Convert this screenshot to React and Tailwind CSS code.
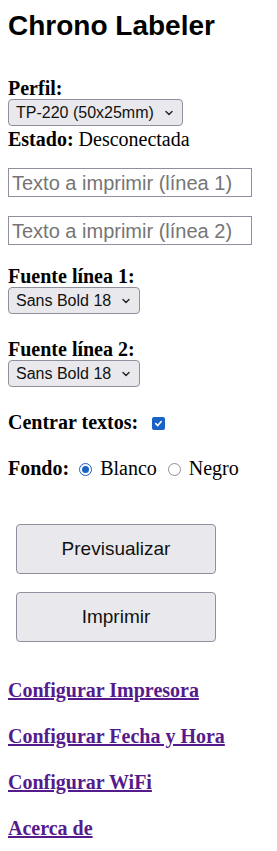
import { useState } from "react";

const serif = "font-['Liberation_Serif','Times_New_Roman',serif]";
const sans = "font-['Liberation_Sans',Arial,sans-serif]";

const Chevron = () => (
  <svg width="10" height="10" viewBox="0 0 10 10" className="ml-2 shrink-0">
    <path d="M2 3.5 L5 6.5 L8 3.5" fill="none" stroke="#222" strokeWidth="1.4" strokeLinecap="round" strokeLinejoin="round" />
  </svg>
);

const FakeSelect = ({ value, width }) => (
  <div className={`flex h-[27px] items-center rounded-[4px] border border-[#8f8f9d] bg-[#e9e9ed] pl-[7px] pr-[8px] text-[16px] text-[#111] ${sans} ${width}`}>
    <span className="flex-1 whitespace-nowrap leading-none">{value}</span>
    <Chevron />
  </div>
);

const App = () => {
  const [centrar, setCentrar] = useState(true);
  const [fondo, setFondo] = useState("blanco");

  return (
    <div className={`px-2 text-[20px] text-black ${serif}`}>
      <h1 className={`mt-[10px] text-[28px] font-bold leading-[32px] ${sans}`}>Chrono Labeler</h1>

      <div className="mt-[35px] font-bold leading-[22px]">Perfil:</div>
      <FakeSelect value="TP-220 (50x25mm)" width="w-[175px]" />
      <div className="mt-[2px] leading-[22px]"><b>Estado:</b> Desconectada</div>

      <input
        placeholder="Texto a imprimir (línea 1)"
        className={`mt-[18px] block h-[29px] w-[244px] border border-[#8f8f9d] px-[3px] text-[20px] placeholder:text-[#757575] ${sans}`}
      />
      <input
        placeholder="Texto a imprimir (línea 2)"
        className={`mt-[19px] block h-[29px] w-[244px] border border-[#8f8f9d] px-[3px] text-[20px] placeholder:text-[#757575] ${sans}`}
      />

      <div className="mt-[20px] font-bold leading-[22px]">Fuente línea 1:</div>
      <FakeSelect value="Sans Bold 18" width="w-[132px]" />

      <div className="mt-[24px] font-bold leading-[22px]">Fuente línea 2:</div>
      <FakeSelect value="Sans Bold 18" width="w-[132px]" />

      <div className="mt-[24px] flex items-center leading-[22px]">
        <b>Centrar textos:</b>
        <button
          onClick={() => setCentrar(!centrar)}
          className={`ml-[14px] mt-[2px] flex h-[13px] w-[13px] items-center justify-center rounded-[2px] ${centrar ? "bg-[#1a62c4]" : "border border-[#8f8f9d] bg-white"}`}
        >
          {centrar && (
            <svg width="9" height="9" viewBox="0 0 10 10">
              <path d="M2 5.2 L4.2 7.3 L8 2.8" fill="none" stroke="white" strokeWidth="1.8" strokeLinecap="round" strokeLinejoin="round" />
            </svg>
          )}
        </button>
      </div>

      <div className="mt-[24px] flex items-center leading-[22px]">
        <b>Fondo:</b>
        <label className="ml-[10px] flex cursor-pointer items-center" onClick={() => setFondo("blanco")}>
          <span className={`mt-[2px] flex h-[13px] w-[13px] items-center justify-center rounded-full border ${fondo === "blanco" ? "border-[#1a62c4]" : "border-[#8f8f9d]"}`}>
            {fondo === "blanco" && <span className="h-[7px] w-[7px] rounded-full bg-[#1a62c4]" />}
          </span>
          <span className="ml-[8px]">Blanco</span>
        </label>
        <label className="ml-[11px] flex cursor-pointer items-center" onClick={() => setFondo("negro")}>
          <span className={`mt-[2px] flex h-[13px] w-[13px] items-center justify-center rounded-full border ${fondo === "negro" ? "border-[#1a62c4]" : "border-[#8f8f9d]"}`}>
            {fondo === "negro" && <span className="h-[7px] w-[7px] rounded-full bg-[#1a62c4]" />}
          </span>
          <span className="ml-[8px]">Negro</span>
        </label>
      </div>

      <div className="mt-[45px] flex flex-col gap-[18px] pl-[8px]">
        <button className={`h-[50px] w-[200px] rounded-[4px] border border-[#8f8f9d] bg-[#e9e9ed] text-[19px] text-[#111] ${sans}`}>Previsualizar</button>
        <button className={`h-[50px] w-[200px] rounded-[4px] border border-[#8f8f9d] bg-[#e9e9ed] text-[19px] text-[#111] ${sans}`}>Imprimir</button>
      </div>

      <div className="mt-[37px] flex flex-col gap-[24px] font-bold leading-[22px]">
        <a href="#" className="self-start text-[#551a8b] underline">Configurar Impresora</a>
        <a href="#" className="self-start text-[#551a8b] underline">Configurar Fecha y Hora</a>
        <a href="#" className="self-start text-[#551a8b] underline">Configurar WiFi</a>
        <a href="#" className="self-start text-[#551a8b] underline">Acerca de</a>
      </div>
    </div>
  );
};

export default App;
